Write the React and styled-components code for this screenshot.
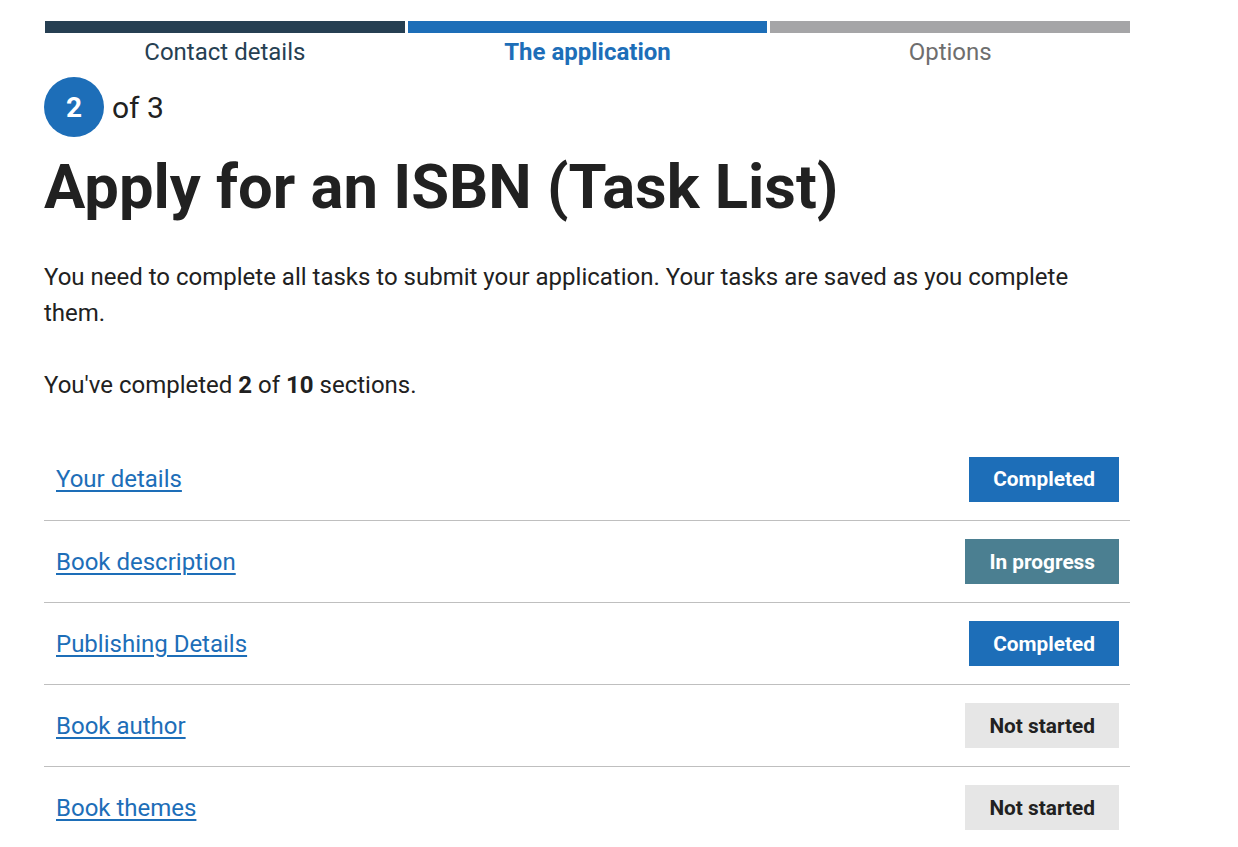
import React from "react";
import styled, { createGlobalStyle } from "styled-components";

const Global = createGlobalStyle`
  html, body { margin: 0; padding: 0; background: #fff; }
  body { font-family: Roboto, "Noto Sans", sans-serif; color: #212121; }
`;

const Page = styled.div`
  width: 1086px;
  padding: 21px 0 0 44px;
`;

const Steps = styled.ol`
  list-style: none;
  margin: 0;
  padding: 0 0 0 1px;
  display: grid;
  grid-template-columns: repeat(3, 1fr);
  column-gap: 3px;
`;

const Step = styled.li`
  display: flex;
  flex-direction: column;
  align-items: center;
  &::before {
    content: "";
    display: block;
    align-self: stretch;
    height: 12px;
    background: ${(p) => p.$bar};
  }
`;

const StepLabel = styled.span`
  font-size: 24px;
  line-height: 38px;
  color: ${(p) => p.$color};
  font-weight: ${(p) => (p.$bold ? 700 : 400)};
`;

const Counter = styled.div`
  display: flex;
  align-items: center;
  gap: 8px;
  margin-top: 6px;
`;

const Circle = styled.span`
  width: 60px;
  height: 60px;
  border-radius: 50%;
  background: #1d6eb8;
  color: #fff;
  font-size: 28px;
  font-weight: 700;
  display: flex;
  align-items: center;
  justify-content: center;
`;

const Of = styled.span`
  font-size: 30px;
  color: #212121;
`;

const Title = styled.h1`
  margin: 10px 0 0;
  font-size: 61.5px;
  line-height: 80px;
  font-weight: 700;
  color: #212121;
`;

const Para = styled.p`
  margin: ${(p) => p.$mt || 0}px 0 0;
  font-size: 24px;
  line-height: 36px;
  max-width: 1040px;
`;

const List = styled.ul`
  list-style: none;
  margin: 35px 0 0;
  padding: 0;
`;

const Row = styled.li`
  display: flex;
  align-items: center;
  justify-content: space-between;
  height: 82px;
  padding: 0 11px 0 12px;
  box-sizing: border-box;
  & + & {
    border-top: 1px solid #bfbfbf;
  }
`;

const TaskLink = styled.a`
  font-size: 24px;
  color: #1d6eb8;
  text-decoration: underline;
  text-underline-offset: 3px;
  text-decoration-thickness: 2px;
`;

const badgeColors = {
  done: { bg: "#1d6eb8", fg: "#fff" },
  progress: { bg: "#4b7f91", fg: "#fff" },
  todo: { bg: "#e6e6e6", fg: "#212121" },
};

const Badge = styled.span`
  box-sizing: border-box;
  height: 45px;
  padding: 0 24px;
  display: inline-flex;
  align-items: center;
  justify-content: center;
  font-size: 20.8px;
  font-weight: 700;
  background: ${(p) => badgeColors[p.$kind].bg};
  color: ${(p) => badgeColors[p.$kind].fg};
`;

const tasks = [
  ["Your details", "done", "Completed"],
  ["Book description", "progress", "In progress"],
  ["Publishing Details", "done", "Completed"],
  ["Book author", "todo", "Not started"],
  ["Book themes", "todo", "Not started"],
];

export default function App() {
  return (
    <>
      <Global />
      <Page>
        <Steps>
          <Step $bar="#263f52">
            <StepLabel $color="#263f52">Contact details</StepLabel>
          </Step>
          <Step $bar="#1d6eb8">
            <StepLabel $color="#1d6eb8" $bold>The application</StepLabel>
          </Step>
          <Step $bar="#a5a5a7">
            <StepLabel $color="#6e6e6e">Options</StepLabel>
          </Step>
        </Steps>
        <Counter>
          <Circle>2</Circle>
          <Of>of 3</Of>
        </Counter>
        <Title>Apply for an ISBN (Task List)</Title>
        <Para $mt={32}>
          You need to complete all tasks to submit your application. Your tasks are saved as you complete them.
        </Para>
        <Para $mt={36}>
          You've completed <b>2</b> of <b>10</b> sections.
        </Para>
        <List>
          {tasks.map(([name, kind, label]) => (
            <Row key={name}>
              <TaskLink href="#">{name}</TaskLink>
              <Badge $kind={kind}>{label}</Badge>
            </Row>
          ))}
        </List>
      </Page>
    </>
  );
}
